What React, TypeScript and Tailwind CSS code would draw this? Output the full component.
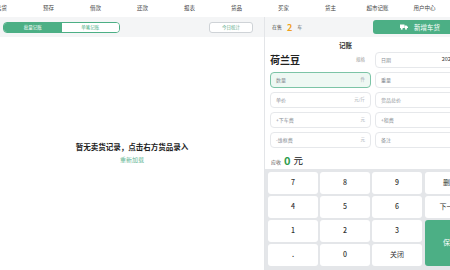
import React from "react";

const navItems = ["卖货", "预存", "借款", "还款", "报表", "货品", "买家", "货主", "超市记账", "用户中心"];

function Field({ label, suffix, active }: { label: string; suffix?: string; active?: boolean }) {
  return (
    <div
      className={
        "h-[16px] w-[101px] shrink-0 rounded-[4px] border flex items-center justify-between px-[5px] " +
        (active ? "border-[#7cc4a6] bg-[#eef8f3]" : "border-[#e6e8eb] bg-white")
      }
    >
      <span className="text-[5px] leading-none text-[#8a8f96]">{label}</span>
      {suffix ? <span className="text-[4.5px] leading-none text-[#a4a9af]">{suffix}</span> : null}
    </div>
  );
}

function Key({ children, className = "" }: { children: React.ReactNode; className?: string }) {
  return (
    <div className={"h-[22px] w-[50px] shrink-0 rounded-[3px] bg-white flex items-center justify-center text-[7px] font-medium text-[#333] " + className}>
      {children}
    </div>
  );
}

export default function App() {
  return (
    <div
      className="w-[450px] h-[270px] overflow-hidden bg-white flex flex-col"
      style={{ fontFamily: '"Noto Sans CJK SC", "Noto Sans", sans-serif' }}
    >
      {/* top nav */}
      <div className="h-[17px] shrink-0 flex items-center bg-white">
        <div className="flex ml-[-22px]">
          {navItems.map((n) => (
            <div key={n} className="w-[47px] shrink-0 text-center text-[5.5px] leading-none text-[#444]">
              {n}
            </div>
          ))}
        </div>
      </div>

      <div className="flex flex-1 min-h-0">
        {/* left panel */}
        <div className="w-[265px] shrink-0 flex flex-col border-r border-[#e3e5e8]">
          <div className="h-[20px] shrink-0 bg-[#f4f5f6] flex items-center justify-between pl-[3px] pr-[11px]">
            <div className="flex h-[11px] w-[117px] rounded-[4px] border border-[#4caf85] overflow-hidden">
              <div className="flex-1 bg-[#4caf85] flex items-center justify-center text-[4.5px] text-white">批量记账</div>
              <div className="flex-1 bg-white flex items-center justify-center text-[4.5px] text-[#4caf85]">单笔记账</div>
            </div>
            <div className="h-[11px] w-[44px] rounded-[3px] border border-[#cfd3d7] bg-white flex items-center justify-center text-[4.5px] text-[#5aa884]">
              今日统计
            </div>
          </div>
          <div className="flex-1 flex flex-col items-center pt-[106px]">
            <div className="text-[7.5px] font-bold leading-none text-[#222]">暂无卖货记录，点击右方货品录入</div>
            <div className="mt-[6px] text-[6px] leading-none text-[#63b594]">重新加载</div>
          </div>
        </div>

        {/* right panel */}
        <div className="flex-1 min-w-0 overflow-hidden flex flex-col">
          <div className="h-[20px] shrink-0 bg-[#f4f5f6] flex items-center pl-[7px] gap-[5px]">
            <span className="text-[5px] text-[#444]">在售</span>
            <span className="text-[9px] font-bold text-[#f0a020] leading-none">2</span>
            <span className="text-[5px] text-[#666]">车</span>
            <div className="ml-auto mr-[-10px] h-[14px] w-[87px] shrink-0 rounded-[3px] bg-[#4caf85] flex items-center pl-[27px] gap-[6px]">
              <svg width="8" height="6" viewBox="0 0 16 12">
                <rect x="0" y="1" width="9" height="7" fill="white" />
                <path d="M9 3h4l3 3v2H9z" fill="white" />
                <circle cx="3.5" cy="9.5" r="2" fill="white" />
                <circle cx="12" cy="9.5" r="2" fill="white" />
              </svg>
              <span className="text-[6.5px] text-white leading-none">新增车货</span>
            </div>
          </div>

          <div className="w-[161px] text-center text-[6.5px] font-semibold text-[#333] leading-none mt-[5px]">记账</div>

          <div className="flex flex-col gap-[4px] pl-[5px] mt-[3px]">
            <div className="flex gap-[4px]">
              <div className="h-[16px] w-[101px] shrink-0 flex items-center justify-between pr-[6px]">
                <span className="text-[10px] font-bold text-[#222] leading-none">荷兰豆</span>
                <span className="text-[4.5px] text-[#999] leading-none">规格</span>
              </div>
              <div className="h-[16px] w-[101px] shrink-0 rounded-[4px] border border-[#e6e8eb] flex items-center justify-between px-[5px]">
                <span className="text-[5px] leading-none text-[#8a8f96]">日期</span>
                <span className="text-[5.5px] leading-none text-[#333]">2024-05-20</span>
              </div>
            </div>
            <div className="flex gap-[4px]">
              <Field label="数量" suffix="件" active />
              <Field label="重量" />
            </div>
            <div className="flex gap-[4px]">
              <Field label="单价" suffix="元/斤" />
              <Field label="货品总价" />
            </div>
            <div className="flex gap-[4px]">
              <Field label="+下车费" suffix="元" />
              <Field label="+租费" />
            </div>
            <div className="flex gap-[4px]">
              <Field label="-维框费" suffix="元" />
              <Field label="备注" />
            </div>
          </div>

          <div className="flex items-end pl-[6px] mt-[6px] h-[12px]">
            <span className="text-[5px] text-[#555] leading-none mb-[2px]">应收</span>
            <span className="ml-[3px] text-[11px] font-bold text-[#2e9e4f] leading-none">0</span>
            <span className="ml-[3px] text-[9.5px] text-[#222] leading-none">元</span>
          </div>

          <div className="mt-[3px] flex-1 bg-[#e4e6e9] pt-[3px] pl-[3px] flex gap-[3px]">
            <div className="grid shrink-0 grid-cols-[50px_50px_50px] gap-[2px] content-start">
              <Key>7</Key>
              <Key>8</Key>
              <Key>9</Key>
              <Key>4</Key>
              <Key>5</Key>
              <Key>6</Key>
              <Key>1</Key>
              <Key>2</Key>
              <Key>3</Key>
              <Key>.</Key>
              <Key>0</Key>
              <Key className="font-normal text-[6.5px]">关闭</Key>
            </div>
            <div className="flex shrink-0 flex-col gap-[2px]">
              <Key className="font-normal text-[6.5px]">删除</Key>
              <Key className="font-normal text-[6.5px]">下一项</Key>
              <div className="h-[46px] w-[50px] rounded-[3px] bg-[#4caf85] flex items-center justify-center text-[7px] text-white">
                保存
              </div>
            </div>
          </div>
        </div>
      </div>
    </div>
  );
}
